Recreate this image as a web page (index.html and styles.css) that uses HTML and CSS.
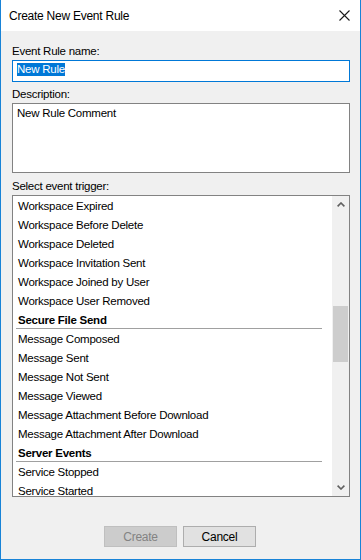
FILE: index.html
```html
<!DOCTYPE html>
<html lang="en">
<head>
  <meta charset="UTF-8">
  <title>Create New Event Rule</title>
  <link rel="stylesheet" href="styles.css">
</head>
<body>
  <div class="window">
    <div class="titlebar">
      <span class="title">Create New Event Rule</span>
      <svg class="close" width="11" height="11" viewBox="0 0 11 11">
        <path d="M0.5 0.5 L10.5 10.5 M10.5 0.5 L0.5 10.5" stroke="#1a1a1a" stroke-width="1.1" fill="none"/>
      </svg>
    </div>
    <div class="content">
      <div class="label">Event Rule name:</div>
      <div class="textbox focused"><span class="selected">New Rule</span></div>

      <div class="label gap-sm">Description:</div>
      <div class="textarea">New Rule Comment</div>

      <div class="label gap-md">Select event trigger:</div>
      <div class="listbox">
        <div class="list-items">
          <div class="item">Workspace Expired</div>
          <div class="item">Workspace Before Delete</div>
          <div class="item">Workspace Deleted</div>
          <div class="item">Workspace Invitation Sent</div>
          <div class="item">Workspace Joined by User</div>
          <div class="item">Workspace User Removed</div>
          <div class="group">Secure File Send</div>
          <div class="item">Message Composed</div>
          <div class="item">Message Sent</div>
          <div class="item">Message Not Sent</div>
          <div class="item">Message Viewed</div>
          <div class="item">Message Attachment Before Download</div>
          <div class="item">Message Attachment After Download</div>
          <div class="group">Server Events</div>
          <div class="item">Service Stopped</div>
          <div class="item">Service Started</div>
        </div>
        <div class="scrollbar">
          <div class="arrow">
            <svg width="8" height="5" viewBox="0 0 8 5"><polyline points="0.6,4.4 4,1 7.4,4.4" stroke="#606060" stroke-width="1.6" fill="none"/></svg>
          </div>
          <div class="track">
            <div class="thumb"></div>
          </div>
          <div class="arrow">
            <svg width="8" height="5" viewBox="0 0 8 5"><polyline points="0.6,0.6 4,4 7.4,0.6" stroke="#606060" stroke-width="1.6" fill="none"/></svg>
          </div>
        </div>
      </div>

      <div class="buttons">
        <button class="btn" disabled>Create</button>
        <button class="btn">Cancel</button>
      </div>
    </div>
  </div>
</body>
</html>
```

FILE: styles.css
```css
html, body {
  margin: 0;
  padding: 0;
}
body {
  font-family: "Liberation Sans", Arial, sans-serif;
  font-size: 11.5px;
  letter-spacing: -0.25px;
  color: #000;
  background: #f0f0f0;
}

.window {
  width: 361px;
  height: 560px;
  box-sizing: border-box;
  border: 1px solid #1883d7;
  border-top: none;
  background: #f0f0f0;
  display: flex;
  flex-direction: column;
}

.titlebar {
  height: 31px;
  background: #fff;
  display: flex;
  align-items: center;
  justify-content: space-between;
  padding: 0 10px 0 8px;
  flex-shrink: 0;
}
.title {
  font-size: 12px;
  line-height: 15px;
  padding-top: 1px;
}
.close {
  display: block;
}

.content {
  flex: 1;
  padding: 12px 10px 0 11px;
  display: flex;
  flex-direction: column;
}

.label {
  box-sizing: border-box;
  height: 15px;
  line-height: 15px;
  padding-top: 1px;
  margin-bottom: 2px;
}
.gap-sm { margin-top: 4px; }
.gap-md { margin-top: 5px; }

.textbox {
  height: 22px;
  box-sizing: border-box;
  border: 1px solid #7a7a7a;
  background: #fff;
  display: flex;
  align-items: flex-start;
  padding: 2px 3px 0 4px;
}
.textbox.focused {
  border-color: #0078d7;
}
.selected {
  background: #0078d7;
  color: #fff;
  line-height: 13px;
}

.textarea {
  height: 70px;
  box-sizing: border-box;
  border: 1px solid #828282;
  background: #fff;
  padding: 2px 4px;
  line-height: 15px;
}

.listbox {
  height: 302px;
  box-sizing: border-box;
  border: 1px solid #828282;
  background: #fff;
  display: flex;
}
.list-items {
  flex: 1;
  overflow: hidden;
  padding-top: 1px;
}
.item {
  height: 19px;
  line-height: 19px;
  padding-left: 5px;
  white-space: nowrap;
}
.group {
  font-weight: bold;
  line-height: 15px;
  padding: 2px 0 0 2px;
  margin: 0 10px 1px 3px;
  border-bottom: 1px solid #a0a0a0;
  white-space: nowrap;
}

.scrollbar {
  width: 17px;
  background: #f0f0f0;
  display: flex;
  flex-direction: column;
}
.arrow {
  height: 17px;
  display: flex;
  align-items: center;
  justify-content: center;
}
.arrow svg {
  display: block;
}
.track {
  flex: 1;
  padding-top: 93px;
}
.thumb {
  height: 56px;
  margin: 0 1px;
  background: #cdcdcd;
}

.buttons {
  margin-top: 29px;
  display: flex;
  justify-content: center;
  gap: 6px;
  padding-right: 2px;
}
.btn {
  width: 73px;
  height: 21px;
  box-sizing: border-box;
  border: 1px solid #adadad;
  background: #e1e1e1;
  font-family: inherit;
  font-size: 12px;
  letter-spacing: inherit;
  color: #000;
  padding: 0;
}
.btn:disabled {
  background: #cccccc;
  border-color: #bfbfbf;
  color: #838383;
}
```
